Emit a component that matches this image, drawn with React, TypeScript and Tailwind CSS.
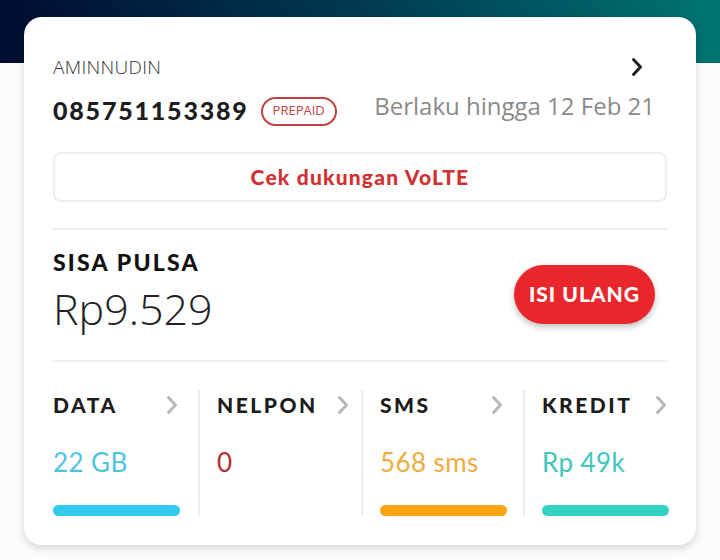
// Account summary card — balance, VoLTE check and quota columns

function Chevron({ className }: { className?: string }) {
  return (
    <svg width="12" height="20" viewBox="0 0 12 20" fill="none" aria-hidden="true" className={className}>
      <path d="M2.5 2.5L9.5 10L2.5 17.5" stroke="currentColor" strokeWidth="3" strokeLinecap="round" strokeLinejoin="round" />
    </svg>
  )
}

const QUOTAS = [
  { label: 'DATA', value: '22 GB', valueColor: 'text-[#4cc4dc]', bar: 'bg-[#33c9ee]' },
  { label: 'NELPON', value: '0', valueColor: 'text-[#b3302e]', bar: '' },
  { label: 'SMS', value: '568 sms', valueColor: 'text-[#eeab3e]', bar: 'bg-[#fda413]' },
  { label: 'KREDIT', value: 'Rp 49k', valueColor: 'text-[#3fc6ba]', bar: 'bg-[#35d2c4]' },
]

export default function App() {
  return (
    <div className="relative w-[720px] h-[560px] overflow-hidden bg-[#fcfcfc] font-['Open_Sans',sans-serif]">
      {/* header band */}
      <div className="h-[63px] w-full bg-gradient-to-r from-[#000d30] via-[#023a52] to-[#007571]" />

      <div className="absolute left-[24px] top-[17px] w-[672px] h-[528px] bg-white rounded-[18px] shadow-[0_3px_10px_rgba(0,0,0,0.16)] px-[29px] pt-[38px]">
        {/* name row */}
        <div className="flex items-center justify-between h-[24px]">
          <span className="text-[19px] font-light text-[#333] tracking-[0.3px]">AMINNUDIN</span>
          <Chevron className="text-[#1e1e1e] mr-[24px]" />
        </div>

        {/* number row */}
        <div className="flex items-center mt-[16px] h-[32px]">
          <span className="font-['Lato',sans-serif] font-black text-[25px] text-[#1d1d1d] tracking-[1.8px]">085751153389</span>
          <span className="ml-[12px] h-[29px] px-[10px] flex items-center rounded-full border-2 border-[#c0423f] text-[#c0423f] text-[13px]">PREPAID</span>
          <span className="ml-auto mr-[12px] text-[24px] text-[#8a8a8a] -mt-[10px]">Berlaku hingga 12 Feb 21</span>
        </div>

        {/* VoLTE */}
        <div className="mt-[25px] h-[50px] rounded-[8px] border-2 border-[#eeeeee] flex items-center justify-center">
          <span className="font-['Lato',sans-serif] font-black text-[21px] tracking-[1.2px] text-[#d1302f]">Cek dukungan VoLTE</span>
        </div>

        <div className="mt-[26px] h-[2px] bg-[#eeeeee]" />

        {/* balance */}
        <div className="flex items-center justify-between h-[130px]">
          <div className="flex flex-col -mt-[8px]">
            <span className="font-['Lato',sans-serif] font-black text-[23px] tracking-[2.2px] text-[#111] leading-[28px]">SISA PULSA</span>
            <span className="text-[43px] font-light text-[#222] leading-[52px] mt-[7px]">Rp9.529</span>
          </div>
          <button className="mr-[12px] w-[141px] h-[59px] rounded-full bg-[#e8262b] text-white font-['Lato',sans-serif] font-black text-[21px] tracking-[1px] shadow-[0_3px_6px_rgba(0,0,0,0.25)] -mt-[2px]">
            ISI ULANG
          </button>
        </div>

        <div className="h-[2px] bg-[#eeeeee]" />

        {/* quotas */}
        <div className="grid grid-cols-[145px_163px_162px_1fr] mt-[28px]">
          {QUOTAS.map((q, i) => (
            <div
              key={q.label}
              className={`flex flex-col h-[126px] ${i > 0 ? 'border-l-2 border-[#ececec] pl-[17px]' : ''} ${i < 3 ? 'pr-[18px]' : ''}`}
            >
              <div className="flex items-center justify-between h-[30px]">
                <span className="font-['Lato',sans-serif] font-black text-[21px] text-[#1c1c1c] tracking-[2.5px]">{q.label}</span>
                <Chevron className={`text-[#b8b8b8] shrink-0 ${i === 1 ? '-mr-[6px]' : 'mr-[2px]'}`} />
              </div>
              <span className={`mt-[23px] text-[26px] tracking-[0.4px] font-['Lato',sans-serif] ${q.valueColor}`}>{q.value}</span>
              {q.bar ? <div className={`mt-auto h-[11px] w-[127px] rounded-full ${q.bar}`} /> : null}
            </div>
          ))}
        </div>
      </div>
    </div>
  )
}
